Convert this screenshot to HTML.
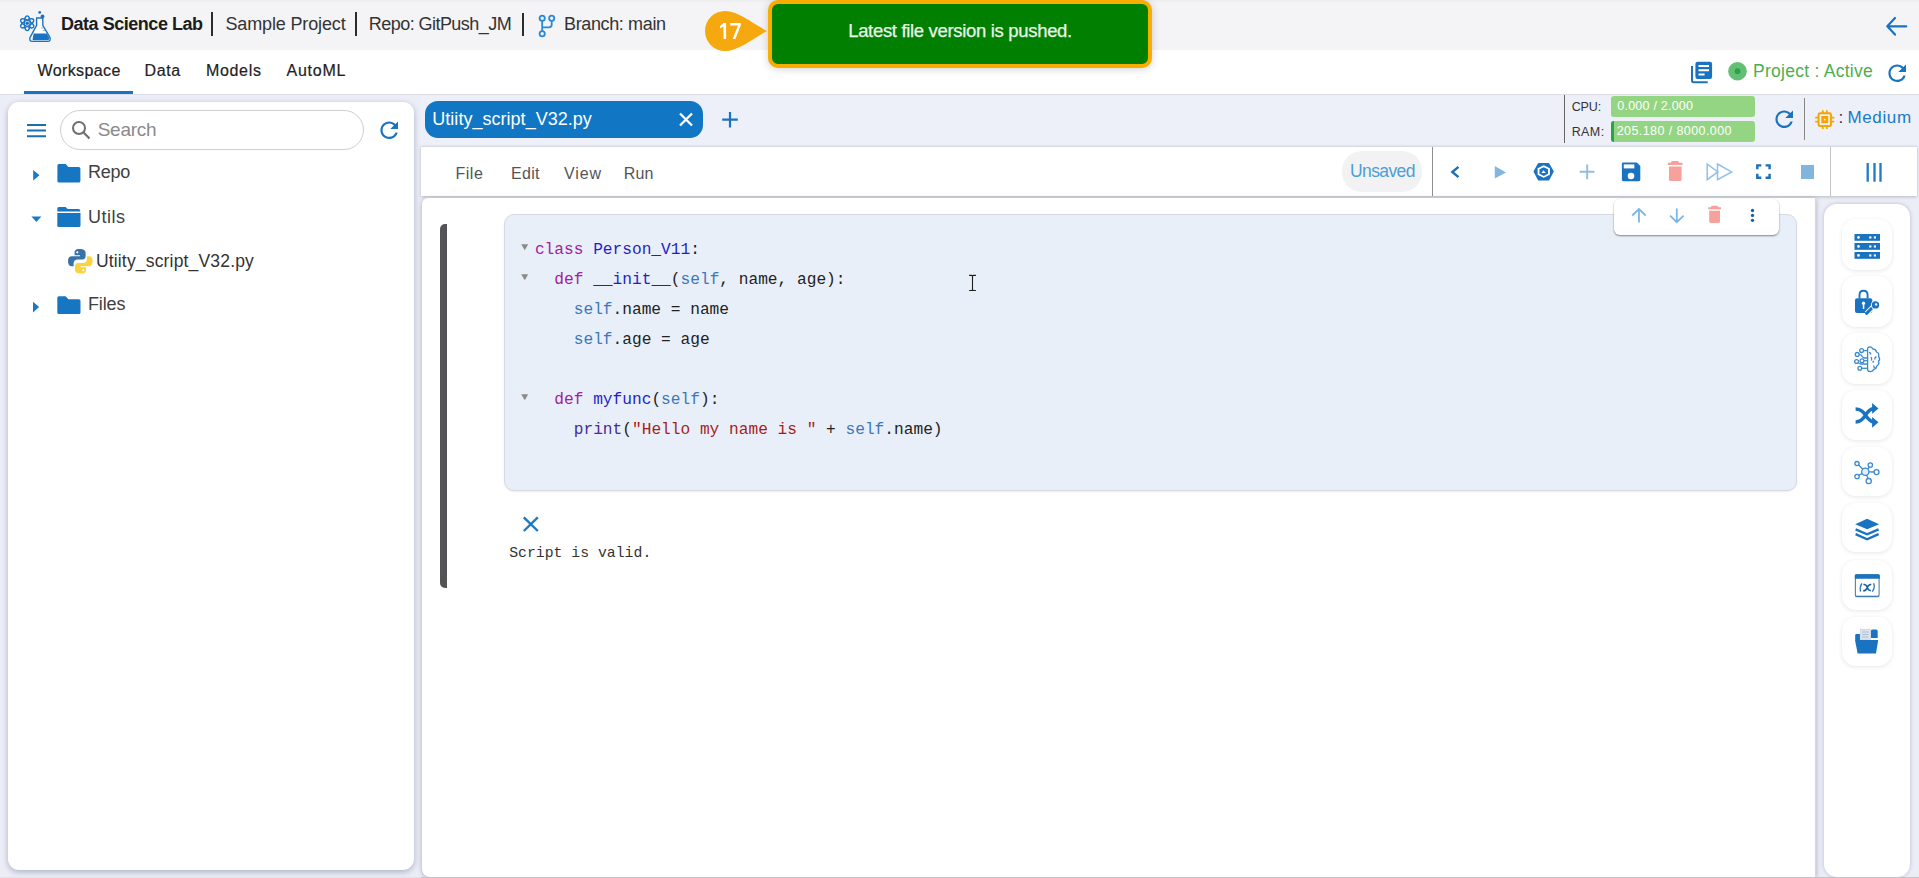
<!DOCTYPE html>
<html><head><meta charset="utf-8">
<style>
*{box-sizing:border-box;margin:0;padding:0}
html,body{width:1919px;height:878px;overflow:hidden;background:#eceef7;font-family:"Liberation Sans",sans-serif;color:#222}
.a{position:absolute}
.t{position:absolute;white-space:nowrap;line-height:1}
svg{position:absolute;overflow:visible}
</style></head><body>
<!-- header -->
<div class="a" style="left:0;top:0;width:1919px;height:50px;background:#f4f4f6"></div>
<div class="a" style="left:0;top:0;width:1919px;height:2px;background:#eeeef0"></div>
<div class="a" style="left:211px;top:12px;width:2px;height:24px;background:#2c2c2c"></div>
<div class="a" style="left:355px;top:12px;width:2px;height:24px;background:#2c2c2c"></div>
<div class="a" style="left:522px;top:13px;width:2px;height:23px;background:#2c2c2c"></div>
<!-- nav -->
<div class="a" style="left:0;top:50px;width:1919px;height:44px;background:#fff"></div>
<div class="a" style="left:0;top:94px;width:1919px;height:1px;background:#dcdee6"></div>
<div class="a" style="left:24px;top:91px;width:109px;height:3px;background:#1a73c0"></div>
<!-- left panel -->
<div class="a" style="left:8px;top:102px;width:406px;height:768px;background:#fff;border-radius:11px;box-shadow:0 2px 6px rgba(40,50,90,.33)"></div>
<div class="a" style="left:60px;top:110px;width:304px;height:40px;border:1px solid #cfcfcf;border-radius:20px"></div>
<!-- tab bar -->
<div class="a" style="left:421px;top:95px;width:1498px;height:52px;background:#edf0f9"></div>
<div class="a" style="left:1564px;top:95px;width:1px;height:48px;background:#666"></div>
<div class="a" style="left:1804px;top:98px;width:1px;height:42px;background:#888"></div>
<div class="a" style="left:425px;top:101px;width:278px;height:37px;background:#1176c3;border-radius:13px"></div>
<div class="a" style="left:1611px;top:96px;width:144px;height:21px;background:#94d584;border-radius:3px"></div>
<div class="a" style="left:1611px;top:121px;width:144px;height:21px;background:#94d584;border-radius:3px"></div>
<div class="a" style="left:1611px;top:121px;width:3px;height:21px;background:#2aa24a;border-radius:3px 0 0 3px"></div>
<!-- menubar -->
<div class="a" style="left:421px;top:146px;width:1496px;height:50px;background:#fff;border-top:1px solid #d9dbe3;box-shadow:0 1px 3px rgba(0,0,0,.22)"></div>
<div class="a" style="left:1342px;top:151px;width:80px;height:41px;background:#f2f2f4;border-radius:20px"></div>
<div class="a" style="left:1432px;top:147px;width:1.3px;height:49px;background:#8e8e92"></div>
<div class="a" style="left:1829.5px;top:147px;width:1.5px;height:49px;background:#c4c4c8"></div>
<!-- content -->
<div class="a" style="left:421.5px;top:198px;width:1394px;height:679px;background:#fff;border-radius:6px 0 0 8px;box-shadow:0 1px 5px rgba(40,50,90,.35)"></div>
<div class="a" style="left:1815px;top:197px;width:1px;height:681px;background:#d8d8dc"></div>
<div class="a" style="left:440px;top:224px;width:7px;height:364px;background:#545456;border-radius:5px 0 0 5px"></div>
<div class="a" style="left:504px;top:214px;width:1293px;height:277px;background:#e9eff8;border:1px solid #d5dae3;border-radius:10px;box-shadow:0 1px 2px rgba(0,0,0,.08)"></div>
<div class="a" style="left:1614px;top:199px;width:165px;height:36px;background:#fff;border-radius:6px;box-shadow:0 1px 2px rgba(0,0,0,.45)"></div>
<!-- right sidebar -->
<div class="a" style="left:1824px;top:204px;width:86px;height:673px;background:#fff;border-radius:13px;box-shadow:0 0 4px rgba(60,70,120,.3)"></div>
<div class="a" style="left:1842px;top:219px;width:50px;height:51px;background:#fff;border-radius:14px;box-shadow:0 1px 4px rgba(0,0,0,.1)"></div>
<div class="a" style="left:1842px;top:276px;width:50px;height:51px;background:#fff;border-radius:14px;box-shadow:0 1px 4px rgba(0,0,0,.1)"></div>
<div class="a" style="left:1842px;top:333px;width:50px;height:51px;background:#fff;border-radius:14px;box-shadow:0 1px 4px rgba(0,0,0,.1)"></div>
<div class="a" style="left:1842px;top:390px;width:50px;height:50px;background:#fff;border-radius:14px;box-shadow:0 1px 4px rgba(0,0,0,.1)"></div>
<div class="a" style="left:1842px;top:447px;width:50px;height:49px;background:#fff;border-radius:14px;box-shadow:0 1px 4px rgba(0,0,0,.1)"></div>
<div class="a" style="left:1842px;top:503px;width:50px;height:49px;background:#fff;border-radius:14px;box-shadow:0 1px 4px rgba(0,0,0,.1)"></div>
<div class="a" style="left:1842px;top:560px;width:50px;height:50px;background:#fff;border-radius:14px;box-shadow:0 1px 4px rgba(0,0,0,.1)"></div>
<div class="a" style="left:1842px;top:617px;width:50px;height:49px;background:#fff;border-radius:14px;box-shadow:0 1px 4px rgba(0,0,0,.1)"></div>
<!-- toast -->
<div class="a" style="left:768px;top:0px;width:384px;height:68px;background:#007f00;border:4px solid #f9ad00;border-radius:10px;box-shadow:0 1px 8px rgba(0,0,0,.18)"></div>
<!-- bottom line -->
<div class="a" style="left:0;top:877px;width:421px;height:1px;background:#e0e0e6"></div><div class="a" style="left:421px;top:877px;width:1498px;height:1px;background:#c2c2c8"></div>

<!-- logo -->
<svg style="left:18px;top:10px" width="34" height="34" viewBox="0 0 34 34">
 <g fill="none" stroke="#1a73c0" stroke-width="1.3">
  <ellipse cx="9.2" cy="13.3" rx="2.9" ry="7.4"/>
  <ellipse cx="9.2" cy="13.3" rx="2.9" ry="7.4" transform="rotate(60 9.2 13.3)"/>
  <ellipse cx="9.2" cy="13.3" rx="2.9" ry="7.4" transform="rotate(-60 9.2 13.3)"/>
 </g>
 <circle cx="9.2" cy="13.3" r="1.7" fill="#1a73c0"/>
 <path d="M18.6 8 H24.8 V15.3 L31.9 27.3 Q33 31.4 29.8 31.4 H14.2 Q11 31.4 12.1 27.3 L18.6 15.3 Z" fill="#fff" stroke="#1a73c0" stroke-width="1.4" stroke-linejoin="round"/>
 <path d="M15.6 23.4 H28.8 L31 27.6 Q31.8 30.3 29.3 30.3 H15.4 Q14.2 30.3 14.6 29 Z" fill="#1a73c0"/>
 <path d="M23 18 H25.5 M24.5 20.5 H27" stroke="#9aa8b8" stroke-width=".8"/>
 <circle cx="21.7" cy="2.4" r="1.4" fill="#1a73c0"/>
 <circle cx="24.5" cy="6.5" r="1.9" fill="#1a73c0"/>
</svg>
<!-- branch -->
<svg style="left:536px;top:12px" width="22" height="26" viewBox="0 0 22 26">
 <g fill="none" stroke="#2a8ad6" stroke-width="1.8">
  <circle cx="6.2" cy="6.3" r="2.6"/>
  <circle cx="15.7" cy="6.3" r="2.6"/>
  <circle cx="6.2" cy="21.8" r="2.6"/>
  <path d="M6.2 8.9 V19.2 M15.7 8.9 V12.5 Q15.7 15.4 12.8 15.4 H6.2"/>
 </g>
</svg>
<!-- badge -->
<svg style="left:700px;top:6px" width="72" height="50" viewBox="0 0 72 50">
 <path d="M25 5 C38 5 52 17 67 25 C52 33 38 45 25 45 A20 20 0 0 1 25 5 Z" fill="#f6a80f"/>
 <path d="M23.5 17 H26.1 V32.9 H23.5 V20.6 L20.1 22.6 V20 Z" fill="#fff"/>
 <path d="M30.2 17 H40.8 V19.3 L35.4 32.9 H32.7 L38 19.4 H30.2 Z" fill="#fff"/>
</svg>
<!-- back arrow -->
<svg style="left:1884px;top:14px" width="26" height="26" viewBox="0 0 26 26">
 <path d="M22.3 12.3 H4 M11 4 L3.3 12.3 L11 20.6" fill="none" stroke="#1a73c0" stroke-width="2.2" stroke-linecap="round" stroke-linejoin="round"/>
</svg>
<!-- docs icon -->
<svg style="left:1690px;top:60px" width="24" height="25" viewBox="0 0 24 25">
 <rect x="5.4" y="1.7" width="16.7" height="17.3" rx="2.2" fill="#1a73c0"/>
 <path d="M8.5 5.9 H19 M8.5 10.2 H19 M8.5 14.5 H14.6" stroke="#fff" stroke-width="2"/>
 <path d="M2 6 V20.5 Q2 22.3 3.8 22.3 H17.7" fill="none" stroke="#1a73c0" stroke-width="2"/>
</svg>
<!-- green dot -->
<svg style="left:1727px;top:61px" width="21" height="21" viewBox="0 0 21 21">
 <circle cx="10.5" cy="10.25" r="9.3" fill="#63bf73"/>
 <circle cx="10.5" cy="10.25" r="2.9" fill="#27a546"/>
</svg>
<!-- refresh top -->
<svg style="left:1883.5px;top:59.5px" width="26.4" height="26.4" viewBox="0 0 24 24">
 <path fill="#1a73c0" d="M17.65 6.35C16.2 4.9 14.21 4 12 4c-4.42 0-7.99 3.58-7.99 8s3.57 8 7.99 8c3.73 0 6.84-2.55 7.73-6h-2.08c-.82 2.33-3.04 4-5.65 4-3.31 0-6-2.69-6-6s2.69-6 6-6c1.66 0 3.14.69 4.22 1.78L13 11h7V4l-2.35 2.35z"/>
</svg>
<!-- hamburger -->
<svg style="left:26px;top:122px" width="22" height="17" viewBox="0 0 22 17">
 <path d="M1 3 H20 M1 8.6 H20 M1 14.2 H20" stroke="#1a6fb0" stroke-width="2"/>
</svg>
<!-- search icon -->
<svg style="left:70px;top:119px" width="22" height="22" viewBox="0 0 22 22">
 <circle cx="9" cy="9" r="6" fill="none" stroke="#6f6f6f" stroke-width="2"/>
 <path d="M13.3 13.3 L19.5 19.5" stroke="#6f6f6f" stroke-width="2.2"/>
</svg>
<!-- left refresh -->
<svg style="left:375.5px;top:116.5px" width="26.4" height="26.4" viewBox="0 0 24 24">
 <path fill="#1a73c0" d="M17.65 6.35C16.2 4.9 14.21 4 12 4c-4.42 0-7.99 3.58-7.99 8s3.57 8 7.99 8c3.73 0 6.84-2.55 7.73-6h-2.08c-.82 2.33-3.04 4-5.65 4-3.31 0-6-2.69-6-6s2.69-6 6-6c1.66 0 3.14.69 4.22 1.78L13 11h7V4l-2.35 2.35z"/>
</svg>
<!-- carets -->
<svg style="left:30px;top:166px" width="14" height="18" viewBox="0 0 14 18">
 <path d="M3.2 4 L9.5 9.2 L3.2 14.5 Z" fill="#1a7ac6"/>
</svg>
<svg style="left:28px;top:212px" width="16" height="14" viewBox="0 0 16 14">
 <path d="M3.4 4.4 H13.4 L8.4 10 Z" fill="#1a7ac6"/>
</svg>
<svg style="left:30px;top:298px" width="14" height="18" viewBox="0 0 14 18">
 <path d="M3 3.8 L9.2 9.1 L3 14.5 Z" fill="#1a7ac6"/>
</svg>
<!-- folders -->
<svg style="left:56px;top:162px" width="26" height="22" viewBox="0 0 26 22">
 <path d="M1.4 3.6 Q1.4 2 3 2 H9.6 L12.4 5 H22.8 Q24.4 5 24.4 6.6 V18.9 Q24.4 20.5 22.8 20.5 H3 Q1.4 20.5 1.4 18.9 Z" fill="#1676c2"/>
</svg>
<svg style="left:56px;top:205px" width="26" height="24" viewBox="0 0 26 24">
 <path d="M1.3 3.6 Q1.3 2 2.9 2 H9.6 L11.6 4 H22.6 Q24.2 4 24.2 5.6 V6.4 H1.3 Z" fill="#1676c2"/>
 <path d="M1.3 8 H24.5 V20.4 Q24.5 22 22.9 22 H2.9 Q1.3 22 1.3 20.4 Z" fill="#1676c2"/>
</svg>
<svg style="left:56px;top:294px" width="26" height="22" viewBox="0 0 26 22">
 <path d="M1.3 3.9 Q1.3 2.3 2.9 2.3 H9.6 L12.4 5.3 H22.9 Q24.5 5.3 24.5 6.9 V18.4 Q24.5 20 22.9 20 H2.9 Q1.3 20 1.3 18.4 Z" fill="#1676c2"/>
</svg>
<!-- python -->
<svg style="left:67px;top:248px" width="27" height="27" viewBox="0 0 27 27">
 <path d="M12.6 1 C8 1 7.6 3 7.6 4.6 V7.2 H13 V8.2 H4.6 C2.4 8.2 1 10 1 13.2 C1 16.4 2.4 18.2 4.6 18.2 H6.6 V15.2 C6.6 13 8.4 11.4 10.6 11.4 H15.6 C17.4 11.4 18.6 10 18.6 8.2 V4.6 C18.6 2.8 17 1 12.6 1 Z" fill="#3673a8"/>
 <circle cx="10.3" cy="4.3" r="1.1" fill="#fff"/>
 <path d="M14 25.5 C18.6 25.5 19 23.5 19 21.9 V19.3 H13.6 V18.3 H22 C24.2 18.3 25.6 16.5 25.6 13.3 C25.6 10.1 24.2 8.3 22 8.3 H20 V11.3 C20 13.5 18.2 15.1 16 15.1 H11 C9.2 15.1 8 16.5 8 18.3 V21.9 C8 23.7 9.6 25.5 14 25.5 Z" fill="#fcd23f"/>
 <circle cx="16.3" cy="22.2" r="1.1" fill="#fff"/>
</svg>
<!-- tab close & plus -->
<svg style="left:677px;top:111px" width="18" height="17" viewBox="0 0 18 17">
 <path d="M3 2.5 L15 14.5 M15 2.5 L3 14.5" stroke="#fff" stroke-width="2.3"/>
</svg>
<svg style="left:720px;top:110px" width="20" height="20" viewBox="0 0 20 20">
 <path d="M10 2 V17.4 M2.2 9.7 H17.8" stroke="#1a73c0" stroke-width="2.2"/>
</svg>
<!-- cpu refresh -->
<svg style="left:1770.8px;top:106.3px" width="26.4" height="26.4" viewBox="0 0 24 24">
 <path fill="#1a73c0" d="M17.65 6.35C16.2 4.9 14.21 4 12 4c-4.42 0-7.99 3.58-7.99 8s3.57 8 7.99 8c3.73 0 6.84-2.55 7.73-6h-2.08c-.82 2.33-3.04 4-5.65 4-3.31 0-6-2.69-6-6s2.69-6 6-6c1.66 0 3.14.69 4.22 1.78L13 11h7V4l-2.35 2.35z"/>
</svg>
<!-- chip -->
<svg style="left:1813px;top:108px" width="24" height="24" viewBox="0 0 24 24">
 <rect x="5.6" y="5.3" width="12.3" height="12.6" rx="1.5" fill="none" stroke="#f5a500" stroke-width="2"/>
 <rect x="8.3" y="8" width="6.9" height="7.2" fill="#f5a500"/>
 <rect x="11" y="10.8" width="1.5" height="1.5" fill="#fff"/>
 <path d="M9.8 2.2 V5 M13.8 2.2 V5 M9.8 18.2 V21 M13.8 18.2 V21 M2.2 9.6 H5 M2.2 13.6 H5 M18.5 9.6 H21.3 M18.5 13.6 H21.3" stroke="#f5a500" stroke-width="1.8"/>
</svg>
<!-- toolbar -->
<svg style="left:1446px;top:162px" width="18" height="20" viewBox="0 0 18 20">
 <path d="M12.5 4.8 L6.3 10 L12.5 15.2" fill="none" stroke="#1a6fb5" stroke-width="2.4"/>
</svg>
<svg style="left:1492px;top:163px" width="18" height="19" viewBox="0 0 18 19">
 <path d="M2.8 3 L14 9.4 L2.8 15.6 Z" fill="#80b6e0"/>
</svg>
<svg style="left:1531px;top:161px" width="25" height="22" viewBox="0 0 25 22">
 <path d="M7.6 2.1 H17.6 Q18 2.1 18.3 2.5 L22.6 10 Q22.9 10.5 22.6 11 L18.3 18.9 Q18 19.4 17.6 19.4 H7.6 Q7.2 19.4 6.9 18.9 L2.7 11 Q2.5 10.5 2.7 10 L6.9 2.5 Q7.2 2.1 7.6 2.1 Z" fill="#1a73c0"/>
 <path d="M12.75 4.25 L18.9 7.35 V13.75 L12.75 16.85 L6.6 13.75 V7.35 Z" fill="#fff"/>
 <path d="M12.75 6.15 L17.05 8.35 V12.75 L12.75 14.95 L8.45 12.75 V8.35 Z" fill="#1a73c0"/>
 <path d="M12.4 9.2 L14.75 12.1 H10.5 Z" fill="#fff"/>
</svg>
<svg style="left:1577px;top:162px" width="20" height="20" viewBox="0 0 20 20">
 <path d="M10.2 2.4 V17.2 M2.7 9.8 H17.4" stroke="#90bde3" stroke-width="1.9"/>
</svg>
<svg style="left:1620px;top:160px" width="23" height="24" viewBox="0 0 23 24">
 <path d="M1.9 3.8 Q1.9 2.4 3.3 2.4 H16.8 L20.3 5.9 V19.8 Q20.3 21.25 18.9 21.25 H3.3 Q1.9 21.25 1.9 19.8 Z" fill="#1a73c0"/>
 <rect x="3.75" y="4.4" width="10.6" height="4" fill="#fff"/>
 <circle cx="11" cy="16" r="3.3" fill="#fff"/>
</svg>
<svg style="left:1666px;top:160px" width="19" height="24" viewBox="0 0 19 24">
 <path d="M1.8 3.9 H16.5 M6 2.8 Q6 2.2 6.6 2.2 H11.4 Q12 2.2 12 2.8" stroke="#f6a19b" stroke-width="2.2" fill="none"/>
 <path d="M3 6.6 H15.6 V19.4 Q15.6 21 14 21 H4.6 Q3 21 3 19.4 Z" fill="#f6a19b"/>
</svg>
<svg style="left:1704px;top:161px" width="30" height="22" viewBox="0 0 30 22">
 <path d="M3.2 3 L13.8 10.9 L3.2 18.7 Z M13.5 3 L27.6 10.9 L13.5 18.7 Z" fill="none" stroke="#90c0e8" stroke-width="1.5" stroke-linejoin="miter"/>
</svg>
<svg style="left:1754px;top:162px" width="19" height="19" viewBox="0 0 19 19">
 <path d="M3.3 7.3 V3.4 H7.3 M11.6 3.4 H15.6 V7.3 M15.6 11.7 V15.7 H11.6 M7.3 15.7 H3.3 V11.7" fill="none" stroke="#1a6fb5" stroke-width="2.4"/>
</svg>
<div class="a" style="left:1801px;top:165px;width:13px;height:13.5px;background:#80b5de"></div>
<svg style="left:1864px;top:161px" width="20" height="23" viewBox="0 0 20 23">
 <path d="M3.7 2 V20.7 M10.5 2 V20.7 M16.5 2 V20.7" stroke="#2279c6" stroke-width="2.3"/>
</svg>
<!-- cell toolbar -->
<svg style="left:1629px;top:206px" width="20" height="19" viewBox="0 0 20 19">
 <path d="M9.95 16.6 V3.6 M3.2 9.5 L9.95 3 L16.7 9.5" fill="none" stroke="#7db6e3" stroke-width="1.8"/>
</svg>
<svg style="left:1667px;top:206px" width="20" height="19" viewBox="0 0 20 19">
 <path d="M9.8 2.6 V15.6 M3.1 9.7 L9.8 16.2 L16.6 9.7" fill="none" stroke="#7db6e3" stroke-width="1.8"/>
</svg>
<svg style="left:1706px;top:205px" width="18" height="20" viewBox="0 0 18 20">
 <path d="M2.2 3.3 H15 M5.9 2.3 Q5.9 1.8 6.4 1.8 H10.8 Q11.3 1.8 11.3 2.3" stroke="#f6a19b" stroke-width="2" fill="none"/>
 <path d="M3.2 5.8 H14 V16.6 Q14 18 12.6 18 H4.6 Q3.2 18 3.2 16.6 Z" fill="#f6a19b"/>
</svg>
<svg style="left:1748px;top:206px" width="9" height="19" viewBox="0 0 9 19">
 <circle cx="4.5" cy="4.5" r="1.65" fill="#1a5fa5"/><circle cx="4.5" cy="9.4" r="1.65" fill="#1a5fa5"/><circle cx="4.5" cy="14.3" r="1.65" fill="#1a5fa5"/>
</svg>
<!-- fold triangles -->
<svg style="left:519px;top:241px" width="12" height="12" viewBox="0 0 12 12"><path d="M2.2 3.2 H9.2 L5.7 9.2 Z" fill="#8a8a8a"/></svg>
<svg style="left:519px;top:271px" width="12" height="12" viewBox="0 0 12 12"><path d="M2.2 3.2 H9.2 L5.7 9.2 Z" fill="#8a8a8a"/></svg>
<svg style="left:519px;top:391px" width="12" height="12" viewBox="0 0 12 12"><path d="M2.2 3.2 H9.2 L5.7 9.2 Z" fill="#8a8a8a"/></svg>
<!-- X output -->
<svg style="left:521px;top:515px" width="19" height="18" viewBox="0 0 19 18">
 <path d="M2.8 2.4 L16.8 16 M16.8 2.4 L2.8 16" stroke="#1a7ac6" stroke-width="2.4"/>
</svg>
<!-- I-beam -->
<svg style="left:965px;top:271px" width="14" height="24" viewBox="0 0 14 24">
 <path d="M4.1 4.4 H6.6 Q7.5 4.4 7.5 5.4 V18.5 Q7.5 19.5 6.6 19.5 H4.1 M10.9 4.4 H8.4 Q7.5 4.4 7.5 5.4 M7.5 18.5 Q7.5 19.5 8.4 19.5 H10.9" stroke="#1e1e1e" stroke-width="1.1" fill="none"/>
</svg>
<!-- sidebar icons -->
<svg style="left:1850px;top:228px" width="35" height="35" viewBox="0 0 35 35">
 <rect x="4.5" y="6" width="25.5" height="6.8" fill="#1a73c0"/>
 <rect x="4.5" y="15" width="25.5" height="6.8" fill="#1a73c0"/>
 <rect x="4.5" y="24" width="25.5" height="6.8" fill="#1a73c0"/>
 <g fill="#fff"><circle cx="8.5" cy="9.4" r="1.3"/><circle cx="8.5" cy="18.4" r="1.3"/><circle cx="8.5" cy="27.4" r="1.3"/>
 <rect x="19.2" y="8.4" width="2.2" height="2.1"/><rect x="23.8" y="8.4" width="2.2" height="2.1"/>
 <rect x="19.2" y="17.4" width="2.2" height="2.1"/><rect x="23.8" y="17.4" width="2.2" height="2.1"/>
 <rect x="19.2" y="26.4" width="2.2" height="2.1"/><rect x="23.8" y="26.4" width="2.2" height="2.1"/></g>
</svg>
<svg style="left:1850px;top:285px" width="35" height="35" viewBox="0 0 35 35">
 <path d="M9.5 13.5 V10 Q9.5 5.7 13.5 5.7 Q17.6 5.7 17.6 10 V13.5" fill="none" stroke="#1a73c0" stroke-width="1.9"/>
 <rect x="5" y="13.2" width="17.3" height="14.7" rx="2" fill="#1a73c0"/>
 <circle cx="13.5" cy="18.2" r="1.6" fill="#fff"/>
 <rect x="12.8" y="18.2" width="1.5" height="5.8" fill="#fff"/>
 <path d="M16.6 28.4 L23.2 21.8" stroke="#fff" stroke-width="5"/>
 <path d="M16.6 28.4 L23.2 21.8" stroke="#1a73c0" stroke-width="3" stroke-linecap="round"/>
 <circle cx="25.5" cy="19.9" r="4.6" fill="#fff"/>
 <circle cx="25.5" cy="19.9" r="3.7" fill="#1a73c0"/>
 <circle cx="26.1" cy="19.4" r="1.2" fill="#fff"/>
</svg>
<svg style="left:1850px;top:342px" width="35" height="35" viewBox="0 0 35 35">
 <g fill="none" stroke="#3a8ad0" stroke-width="1.3">
 <path d="M17.6 6.5 V27.5 Q17.6 29.6 20.2 29.6 Q23 29.6 23.6 27.3 Q26.6 27 26.8 24 Q29.7 22.5 28.6 19.3 Q30.6 17 28.6 14.3 Q29.5 11 26.5 10 Q25.8 7 22.9 7 Q21.6 4.6 19.4 5 Q17.6 5.3 17.6 6.5 Z"/>
 <path d="M19 10.4 Q21 10.8 20.5 12.5 M21 15 Q22 17 21.5 18.6 M22.6 20.5 L23.8 19 M26.4 14.6 Q24.4 15.5 25 17.5 M23.5 23.5 Q23.7 25.5 25.6 26.2"/>
 <circle cx="11.6" cy="8.6" r="1.9"/><path d="M13.5 8.6 H17.6"/>
 <circle cx="7.2" cy="12.4" r="1.9"/><path d="M9.1 12.4 Q11.5 12.4 12.4 14.6 Q13.2 16 15 16 H17.6"/>
 <circle cx="6.6" cy="19.5" r="1.9"/><path d="M8.2 20.5 Q9.2 22 11 22 H17.6"/>
 <circle cx="12" cy="18.7" r="1.9"/><path d="M13.9 18.7 H17.6"/>
 <circle cx="9.8" cy="26.3" r="1.9"/><path d="M11.7 26.3 H17.6"/>
 </g>
</svg>
<svg style="left:1850px;top:398px" width="35" height="35" viewBox="0 0 35 35">
 <path d="M5.6 11 Q11.5 11 15.5 17.1 Q19.5 23.3 23.5 24.1 M5.6 23.9 Q11.5 23.9 15.5 17.1 Q19.3 11 23.5 10.5" fill="none" stroke="#1a73c0" stroke-width="3.5"/>
 <path d="M22.1 5 L28.5 10.4 L22.1 15.7 Z M22.1 18.9 L28.5 24.3 L22.1 29.7 Z" fill="#1a73c0"/>
</svg>
<svg style="left:1850px;top:455px" width="35" height="35" viewBox="0 0 35 35">
 <g stroke="#3a8ad0" stroke-width="1.3" fill="none">
 <path d="M15.3 16.7 L8.4 9.8 M15.3 16.7 L19.8 11.8 M15.3 16.7 L24 17 M15.3 16.7 L8.8 20.4 M15.3 16.7 L18.2 23.8"/>
 </g>
 <g stroke="#3a8ad0" stroke-width="1.3" fill="#fff">
 <circle cx="15.3" cy="16.7" r="3.6" fill="#e8eef5"/>
 <circle cx="7" cy="8.6" r="2.1"/><circle cx="20.3" cy="10" r="2.2"/><circle cx="26.5" cy="17.1" r="2.5"/>
 <circle cx="7" cy="21.5" r="2.2"/><circle cx="18.7" cy="26.1" r="2.6"/>
 </g>
</svg>
<svg style="left:1850px;top:511px" width="35" height="35" viewBox="0 0 35 35">
 <path d="M5.2 13.2 L17.1 7.8 L29.1 13.2 L17.1 18.3 Z" fill="#1a73c0"/>
 <path d="M5.6 18.3 L17.1 23.3 L28.6 18.3" fill="none" stroke="#1a73c0" stroke-width="2.4"/>
 <path d="M5.6 23.1 L17.1 28.3 L28.6 23.1" fill="none" stroke="#1a73c0" stroke-width="2.4"/>
</svg>
<svg style="left:1850px;top:567px" width="35" height="35" viewBox="0 0 35 35">
 <rect x="5.4" y="7.7" width="23.7" height="21.9" rx="1.6" fill="#fff" stroke="#607d99" stroke-width="1.1"/>
 <path d="M4.8 8.6 Q4.8 7.2 6.4 7.2 H28.2 Q29.8 7.2 29.8 8.6 V11.8 H4.8 Z" fill="#1a73c0"/>
 <path d="M5.4 29.3 H29.1" stroke="#3a7ab8" stroke-width="1.2"/>
 <path d="M11.8 16.4 Q9.4 20.4 10.5 24.6 M23.6 16.3 Q25.5 20.4 22.3 24.7" fill="none" stroke="#2a72b8" stroke-width="1.3"/>
 <path d="M13.4 17.6 Q15.9 16.9 17 19.6 Q18.1 23.6 20.9 23.6 M13.1 23.7 Q15.9 24 17.3 20.6 Q18.5 17.1 21.3 17.5" fill="none" stroke="#1f5e9c" stroke-width="1.6"/>
</svg>
<svg style="left:1850px;top:624px" width="35" height="35" viewBox="0 0 35 35">
 <path d="M5.2 11 Q5.2 10 6.3 10 H10.2 V16 H5.2 Z" fill="#1a73c0"/>
 <path d="M20.9 7 Q20.9 5.4 22.5 5.4 H26.2 Q27.7 5.4 27.7 7 V14 H20.9 Z" fill="#1a73c0"/>
 <rect x="10.2" y="5.2" width="10.3" height="10.5" fill="#dbe4ee" stroke="#c4cfdc" stroke-width=".6"/>
 <path d="M12 8 H18.5 M12 10.5 H18.5 M12 13 H18.5" stroke="#aab8c8" stroke-width=".9"/>
 <path d="M5 16 H28.2 L26 29.5 H7.6 Z" fill="#1a73c0"/>
</svg>

<div id="h1" class="t" style="left:61.00px;top:15.16px;font-size:18px;font-family:'Liberation Sans',sans-serif;letter-spacing:-0.467px;font-weight:bold;color:#1c1c1c">Data Science Lab</div>
<div id="h2" class="t" style="left:225.50px;top:15.36px;font-size:18px;font-family:'Liberation Sans',sans-serif;letter-spacing:-0.146px;color:#333">Sample Project</div>
<div id="h3" class="t" style="left:368.80px;top:15.36px;font-size:18px;font-family:'Liberation Sans',sans-serif;letter-spacing:-0.547px;color:#333">Repo: GitPush_JM</div>
<div id="h4" class="t" style="left:564.00px;top:14.76px;font-size:18px;font-family:'Liberation Sans',sans-serif;letter-spacing:-0.364px;color:#333">Branch: main</div>
<div id="n1" class="t" style="left:37.50px;top:62.86px;font-size:16px;font-family:'Liberation Sans',sans-serif;letter-spacing:0.387px;color:#222;-webkit-text-stroke:0.2px #222">Workspace</div>
<div id="n2" class="t" style="left:144.60px;top:62.86px;font-size:16px;font-family:'Liberation Sans',sans-serif;letter-spacing:0.600px;color:#222;-webkit-text-stroke:0.2px #222">Data</div>
<div id="n3" class="t" style="left:205.90px;top:62.86px;font-size:16px;font-family:'Liberation Sans',sans-serif;letter-spacing:0.700px;color:#222;-webkit-text-stroke:0.2px #222">Models</div>
<div id="n4" class="t" style="left:286.50px;top:62.86px;font-size:16px;font-family:'Liberation Sans',sans-serif;letter-spacing:0.760px;color:#222;-webkit-text-stroke:0.2px #222">AutoML</div>
<div id="pa" class="t" style="left:1753.00px;top:62.59px;font-size:17.5px;font-family:'Liberation Sans',sans-serif;letter-spacing:0.267px;color:#4cae4f">Project : Active</div>
<div id="tab" class="t" style="left:432.30px;top:110.36px;font-size:18px;font-family:'Liberation Sans',sans-serif;letter-spacing:0.026px;color:#fff">Utiity_script_V32.py</div>
<div id="m1" class="t" style="left:455.50px;top:165.76px;font-size:16px;font-family:'Liberation Sans',sans-serif;letter-spacing:0.500px;color:#555">File</div>
<div id="m2" class="t" style="left:511.00px;top:165.76px;font-size:16px;font-family:'Liberation Sans',sans-serif;letter-spacing:0.300px;color:#555">Edit</div>
<div id="m3" class="t" style="left:564.00px;top:165.76px;font-size:16px;font-family:'Liberation Sans',sans-serif;letter-spacing:0.867px;color:#555">View</div>
<div id="m4" class="t" style="left:623.80px;top:165.76px;font-size:16px;font-family:'Liberation Sans',sans-serif;letter-spacing:0.100px;color:#555">Run</div>
<div id="uns" class="t" style="left:1350.00px;top:163.19px;font-size:17.5px;font-family:'Liberation Sans',sans-serif;letter-spacing:-0.600px;color:#4a9fd6">Unsaved</div>
<div id="cpu" class="t" style="left:1571.70px;top:100.62px;font-size:12.5px;font-family:'Liberation Sans',sans-serif;letter-spacing:-0.100px;color:#333">CPU:</div>
<div id="ram" class="t" style="left:1571.70px;top:125.62px;font-size:12.5px;font-family:'Liberation Sans',sans-serif;letter-spacing:0.400px;color:#333">RAM:</div>
<div id="cpuv" class="t" style="left:1617.30px;top:100.22px;font-size:12.5px;font-family:'Liberation Sans',sans-serif;letter-spacing:0.225px;color:#fff">0.000 / 2.000</div>
<div id="ramv" class="t" style="left:1616.70px;top:125.42px;font-size:12.5px;font-family:'Liberation Sans',sans-serif;letter-spacing:0.418px;color:#fff">205.180 / 8000.000</div>
<div id="med" class="t" style="left:1838.50px;top:109.31px;font-size:17px;font-family:'Liberation Sans',sans-serif;letter-spacing:0.000px;color:#333">:</div>
<div id="med2" class="t" style="left:1847.50px;top:109.31px;font-size:17px;font-family:'Liberation Sans',sans-serif;letter-spacing:0.620px;color:#1a7ac6">Medium</div>
<div id="srch" class="t" style="left:97.70px;top:120.22px;font-size:19px;font-family:'Liberation Sans',sans-serif;letter-spacing:-0.240px;color:#8a8a8a">Search</div>
<div id="t1" class="t" style="left:88.00px;top:163.16px;font-size:18px;font-family:'Liberation Sans',sans-serif;letter-spacing:-0.267px;color:#404040">Repo</div>
<div id="t2" class="t" style="left:88.00px;top:207.56px;font-size:18px;font-family:'Liberation Sans',sans-serif;letter-spacing:0.500px;color:#404040">Utils</div>
<div id="t3" class="t" style="left:95.90px;top:253.09px;font-size:17.5px;font-family:'Liberation Sans',sans-serif;letter-spacing:0.174px;color:#333">Utiity_script_V32.py</div>
<div id="t4" class="t" style="left:88.00px;top:294.86px;font-size:18px;font-family:'Liberation Sans',sans-serif;letter-spacing:-0.150px;color:#404040">Files</div>
<div id="toast" class="t" style="left:848.20px;top:22.24px;font-size:18.5px;font-family:'Liberation Sans',sans-serif;letter-spacing:-0.324px;color:#e9f6e9;-webkit-text-stroke:0.25px #e9f6e9">Latest file version is pushed.</div>
<div id="c0" class="t" style="left:534.90px;top:241.50px;font-size:16.18px;font-family:'Liberation Mono',monospace;letter-spacing:0.000px;color:#222"><span style="color:#a0229c">class</span> <span style="color:#1f1fc8">Person_V11</span>:</div>
<div id="c1" class="t" style="left:534.90px;top:271.80px;font-size:16.18px;font-family:'Liberation Mono',monospace;letter-spacing:0.000px;color:#222">&nbsp;&nbsp;<span style="color:#a0229c">def</span> <span style="color:#1f1fc8">__init__</span>(<span style="color:#3a78b8">self</span>, name, age):</div>
<div id="c2" class="t" style="left:534.90px;top:301.70px;font-size:16.18px;font-family:'Liberation Mono',monospace;letter-spacing:0.000px;color:#222">&nbsp;&nbsp;&nbsp;&nbsp;<span style="color:#3a78b8">self</span>.name = name</div>
<div id="c3" class="t" style="left:534.90px;top:331.60px;font-size:16.18px;font-family:'Liberation Mono',monospace;letter-spacing:0.000px;color:#222">&nbsp;&nbsp;&nbsp;&nbsp;<span style="color:#3a78b8">self</span>.age = age</div>
<div id="c4" class="t" style="left:534.90px;top:391.60px;font-size:16.18px;font-family:'Liberation Mono',monospace;letter-spacing:0.000px;color:#222">&nbsp;&nbsp;<span style="color:#a0229c">def</span> <span style="color:#1f1fc8">myfunc</span>(<span style="color:#3a78b8">self</span>):</div>
<div id="c5" class="t" style="left:534.90px;top:421.60px;font-size:16.18px;font-family:'Liberation Mono',monospace;letter-spacing:0.000px;color:#222">&nbsp;&nbsp;&nbsp;&nbsp;<span style="color:#4b2a9a">print</span>(<span style="color:#a51d1d">"Hello my name is "</span> + <span style="color:#3a78b8">self</span>.name)</div>
<div id="valid" class="t" style="left:509.20px;top:545.66px;font-size:14.8px;font-family:'Liberation Mono',monospace;letter-spacing:0.000px;color:#333">Script is valid.</div>
</body></html>
